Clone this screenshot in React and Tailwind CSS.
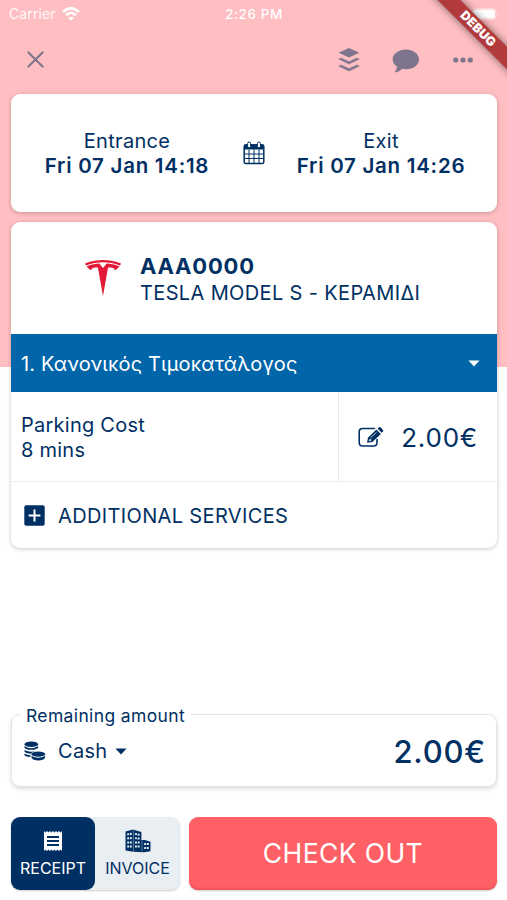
import React, { useState } from "react";
import { SiTesla } from "react-icons/si";
import { MdReceipt } from "react-icons/md";

export default function App() {
  const [docType, setDocType] = useState("receipt"); // receipt | invoice

  return (
    <div className="relative h-[900px] w-[507px] overflow-hidden bg-white bg-[linear-gradient(#ffbec1,#ffbec1)] bg-[length:100%_367px] bg-no-repeat font-['Inter','Liberation_Sans',sans-serif] text-xl text-[#003063] flex flex-col pl-[11px] pr-[10px]">
      <StatusBar />
      <Toolbar />

      {/* Entrance / exit times */}
      <div className="h-[118px] shrink-0 rounded-[9px] bg-white shadow-[0_1px_4px_rgba(0,0,0,0.22)] flex items-center pt-px">
        <TimeColumn label="Entrance" value="Fri 07 Jan 14:18" />
        <CalendarIcon />
        <TimeColumn label="Exit" value="Fri 07 Jan 14:26" />
      </div>

      {/* Vehicle and costs */}
      <div className="mt-[10px] h-[326px] shrink-0 rounded-[9px] bg-white shadow-[0_1px_4px_rgba(0,0,0,0.22)] overflow-hidden">
        <div className="h-28 flex items-center pl-[74px]">
          <SiTesla className="w-9 h-9 text-[#e31937]" />
          <div className="ml-[19px] pt-[2px] whitespace-nowrap">
            <div className="text-[22px] leading-[27px] font-bold tracking-[0.8px]">AAA0000</div>
            <div className="leading-[26px] tracking-[0.36px]">TESLA MODEL S - ΚΕΡΑΜΙΔΙ</div>
          </div>
        </div>

        <button className="h-[58px] w-full bg-[#0065a9] text-white flex items-center justify-between pl-[10px] pr-[17px] pt-px cursor-pointer">
          <span className="tracking-[0.14px]">1. Κανονικός Τιμοκατάλογος</span>
          <Caret />
        </button>

        <div className="h-[90px] flex border-b border-[#eeeff0]">
          <div className="w-[327px] pl-[10px] pt-[2px] flex flex-col justify-center leading-[24.5px] tracking-[0.25px]">
            <span>Parking Cost</span>
            <span>8 mins</span>
          </div>
          <div className="flex-1 border-l border-[#e6e8ea] flex items-center justify-between pl-[19px] pr-[19px] pt-[2px]">
            <EditIcon />
            <span className="pt-px text-[26px] tracking-[0.8px]">2.00€</span>
          </div>
        </div>

        <button className="h-[66px] w-full flex items-center gap-[13px] pl-[13px] cursor-pointer">
          <PlusBoxIcon />
          <span className="pt-px tracking-[0.36px]">ADDITIONAL SERVICES</span>
        </button>
      </div>

      {/* Payment */}
      <div className="relative mt-[166px] h-[73px] shrink-0 rounded-[9px] border border-[#e2e4e6] bg-white shadow-[0_2px_4px_rgba(0,0,0,0.14)] flex items-center justify-between pl-3 pr-[10px]">
        <span className="absolute left-2 -top-[10px] bg-white px-[6px] text-[17.5px] leading-[22px] tracking-[0.36px]">
          Remaining amount
        </span>
        <button className="flex items-center pt-px cursor-pointer">
          <CoinsIcon />
          <span className="ml-[12px] mr-[8px] tracking-[0.3px]">Cash</span>
          <Caret />
        </button>
        <span className="pt-[2px] text-[31px] font-medium tracking-[0.8px]">2.00€</span>
      </div>

      {/* Actions */}
      <div className="mt-[30px] h-[73px] shrink-0 flex gap-[9px]">
        <div className="w-[169px] rounded-[9px] bg-[#e9eef2] shadow-[0_1px_2px_rgba(0,0,0,0.2)] flex text-base">
          <button
            onClick={() => setDocType("receipt")}
            className={`w-[84px] rounded-[9px] flex flex-col items-center pt-3 cursor-pointer ${
              docType === "receipt" ? "bg-[#003063] text-white" : "text-[#003063]"
            }`}
          >
            <MdReceipt className="w-6 h-6" />
            <span className="mt-[3px]">RECEIPT</span>
          </button>
          <button
            onClick={() => setDocType("invoice")}
            className={`w-[85px] rounded-[9px] flex flex-col items-center pt-3 cursor-pointer ${
              docType === "invoice" ? "bg-[#003063] text-white" : "text-[#003063]"
            }`}
          >
            <BuildingIcon />
            <span className="mt-[3px]">INVOICE</span>
          </button>
        </div>
        <button className="flex-1 rounded-[9px] bg-[#ff6065] text-white text-[26.5px] tracking-[0.4px] shadow-[inset_0_-3px_2px_-1px_#ee555b,0_1px_2px_rgba(0,0,0,0.2)] cursor-pointer">
          CHECK OUT
        </button>
      </div>

      <DebugBanner />
    </div>
  );
}

function StatusBar() {
  return (
    <div className="h-[27px] shrink-0 -mx-[2px] flex items-center text-white">
      <div className="flex-1 flex items-center gap-[6px]">
        <span className="text-sm tracking-[0.1px] opacity-90">Carrier</span>
        <svg viewBox="0 0 18 14" className="w-[18px] h-[14px]" fill="none" stroke="currentColor" strokeWidth="2.7">
          <path d="M1 5 Q9 -2.4 17 5" />
          <path d="M4 8.2 Q9 3.6 14 8.2" />
          <path d="M9 13.8 L6.2 11 Q9 8.6 11.8 11 Z" fill="currentColor" stroke="none" />
        </svg>
      </div>
      <span className="pt-px text-[13.5px] font-medium tracking-[0.6px]">2:26 PM</span>
      <div className="flex-1 flex justify-end">
        <svg viewBox="0 0 27 12" className="w-[27px] h-3">
          <rect x="0.5" y="0.5" width="23.5" height="11" rx="3" fill="none" stroke="white" strokeOpacity="0.4" />
          <rect x="1.5" y="1.5" width="21.5" height="9" rx="2" fill="white" />
          <path d="M25.5 4 Q27 6 25.5 8 Z" fill="white" fillOpacity="0.5" />
        </svg>
      </div>
    </div>
  );
}

function Toolbar() {
  return (
    <div className="h-[67px] shrink-0 flex items-center pl-4 pr-6 pb-[2px] text-[#7f748e]">
      <svg viewBox="0 0 18 18" className="w-[17px] h-[17px] mr-auto" stroke="currentColor" strokeWidth="2.2" strokeLinecap="round">
        <path d="M1.5 1.5 L16.5 16.5 M16.5 1.5 L1.5 16.5" />
      </svg>
      <svg viewBox="0 0 22 24" className="w-[22px] h-6" fill="currentColor">
        <path d="M11 0 L21.3 4.7 L11 9.5 L0.7 4.7 Z" />
        <path d="M0.7 11.1 L3.1 10 L11 13.7 L18.9 10 L21.3 11.1 L11 16.1 Z" stroke="currentColor" strokeWidth="0.5" />
        <path d="M0.7 18.1 L3.1 17 L11 20.7 L18.9 17 L21.3 18.1 L11 23.1 Z" stroke="currentColor" strokeWidth="0.5" />
      </svg>
      <svg viewBox="0 0 28 24" className="ml-8 mt-[3px] w-7 h-6" fill="currentColor">
        <path d="M14 0.6 C21.2 0.6 27 5 27 10.4 C27 16 21.2 20.2 14 20.2 C12.6 20.2 11.2 20 10 19.7 C8.5 21.7 5.8 23.3 2.4 23.4 C3.9 21.9 5 19.7 5 17.6 C2.4 15.9 0.6 13.3 0.6 10.4 C0.6 5 6.8 0.6 14 0.6 Z" />
      </svg>
      <svg viewBox="0 0 20 6" className="ml-[33px] w-5 h-[6px]" fill="currentColor">
        <circle cx="2.7" cy="3" r="2.6" />
        <circle cx="10" cy="3" r="2.6" />
        <circle cx="17.3" cy="3" r="2.6" />
      </svg>
    </div>
  );
}

function TimeColumn({ label, value }) {
  return (
    <div className="flex-1 flex flex-col items-center leading-[24.5px] whitespace-nowrap">
      <span className="tracking-[0.3px]">{label}</span>
      <span className="text-[20.5px] font-semibold tracking-[0.74px]">{value}</span>
    </div>
  );
}

function Caret() {
  return (
    <svg viewBox="0 0 12 7" className="w-3 h-[7px]" fill="currentColor">
      <path d="M0.4 0.4 H11.6 L6 6.6 Z" />
    </svg>
  );
}

function CalendarIcon() {
  return (
    <svg viewBox="0 0 22 24" className="w-[22px] h-6 -mt-[2px] shrink-0">
      <rect x="1.2" y="4" width="19.6" height="18.5" rx="1.6" fill="white" stroke="currentColor" strokeWidth="1.5" />
      <path d="M1 8.6 V4.8 Q1 3.2 2.6 3.2 H19.4 Q21 3.2 21 4.8 V8.6 Z" fill="currentColor" />
      <path d="M6 8.6 V22 M11 8.6 V22 M16 8.6 V22 M1.5 13 H20.5 M1.5 17.5 H20.5" stroke="currentColor" strokeWidth="1" />
      <rect x="4.6" y="1" width="3" height="5.8" rx="1.5" fill="white" stroke="currentColor" />
      <rect x="14.4" y="1" width="3" height="5.8" rx="1.5" fill="white" stroke="currentColor" />
    </svg>
  );
}

function EditIcon() {
  return (
    <svg viewBox="0 0 26 22" className="w-[26px] h-[22px] -mt-px shrink-0" fill="none">
      <path d="M16.5 2.5 H4.6 Q1.2 2.5 1.2 5.9 V16.6 Q1.2 20 4.6 20 H15.6 Q19 20 19 16.6 V13.5" stroke="currentColor" strokeWidth="1.6" strokeLinecap="round" />
      <path d="M9 16.8 L10.1 11.4 L18.4 3.4 L22.9 8 L14.4 16 Z" fill="currentColor" />
      <path d="M19.5 2.6 L21 1.3 Q22 0.7 22.8 1.5 L24.9 3.7 Q25.6 4.6 24.9 5.4 L23.6 6.8 Z" fill="currentColor" />
      <path d="M12.5 11.8 L18.5 6.3 M11 14.9 L12.2 12.9 L13.3 14.2 Z" stroke="white" strokeWidth="0.7" />
    </svg>
  );
}

function PlusBoxIcon() {
  return (
    <svg viewBox="0 0 21 21" className="w-[21px] h-[21px]">
      <rect x="0.3" y="0.3" width="20.4" height="20.4" rx="2" fill="currentColor" />
      <path d="M10.5 4.6 V16.4 M4.6 10.5 H16.4" stroke="white" strokeWidth="2" />
    </svg>
  );
}

function CoinsIcon() {
  return (
    <svg viewBox="0 0 22 20" className="w-[22px] h-5" fill="currentColor">
      <ellipse cx="7.3" cy="3.3" rx="6.8" ry="2.8" />
      <path d="M0.5 5.1 Q7.3 9.5 14.1 5.1 V6.7 Q12.8 8.6 7.3 8.8 Q1.7 8.6 0.5 6.7 Z" />
      <path d="M0.5 8.9 Q5 11.6 11 10.3 Q8 11.1 7 12.7 Q1.7 12.5 0.5 10.5 Z" />
      <path d="M0.5 12.6 Q2.8 14.2 6.5 14.3 V16 Q1.7 15.6 0.5 14.2 Z" />
      <ellipse cx="14.3" cy="13.2" rx="6.8" ry="2.6" />
      <path d="M7.5 15 Q14.3 18.6 21.1 15 V16.8 Q19.5 19.4 14.3 19.5 Q9 19.4 7.5 16.8 Z" />
    </svg>
  );
}

function BuildingIcon() {
  return (
    <svg viewBox="0 0 26 24" className="w-[26px] h-6">
      <path d="M0.5 2.6 L8 0.5 L16.4 3 V11 L20 10.9 L25.5 12.8 V22.3 L19 23.2 L8.4 22.8 L0.5 21.4 Z" fill="currentColor" />
      <path
        d="M2.2 5.5 L6.8 4.7 M2.2 9.5 L6.8 9 M2.2 13.5 H6.8 M2.2 17.5 H6.8 M10 4.9 L14.8 5.9 M10 9.1 L14.8 9.7 M10 13.5 H14.8 M10 17.5 H14.8 M19.2 15 H23.8 M19.2 19 H23.8"
        stroke="#e9eef2"
        strokeWidth="1.9"
        strokeDasharray="1.9 0.8"
      />
      <path d="M8.4 1.2 V22.4 M17 11.4 V22.6" stroke="#e9eef2" strokeWidth="0.4" />
    </svg>
  );
}

function DebugBanner() {
  return (
    <div className="absolute right-0 top-0 w-24 h-24 overflow-hidden pointer-events-none">
      <div className="absolute left-[-3px] top-[21px] w-[140px] h-[16px] rotate-45 bg-[#b23a3d] shadow-[0_0_8px_rgba(0,0,0,0.5)] text-white text-[12.5px] leading-[16px] font-black tracking-[0.2px] text-center">
        DEBUG
      </div>
    </div>
  );
}
